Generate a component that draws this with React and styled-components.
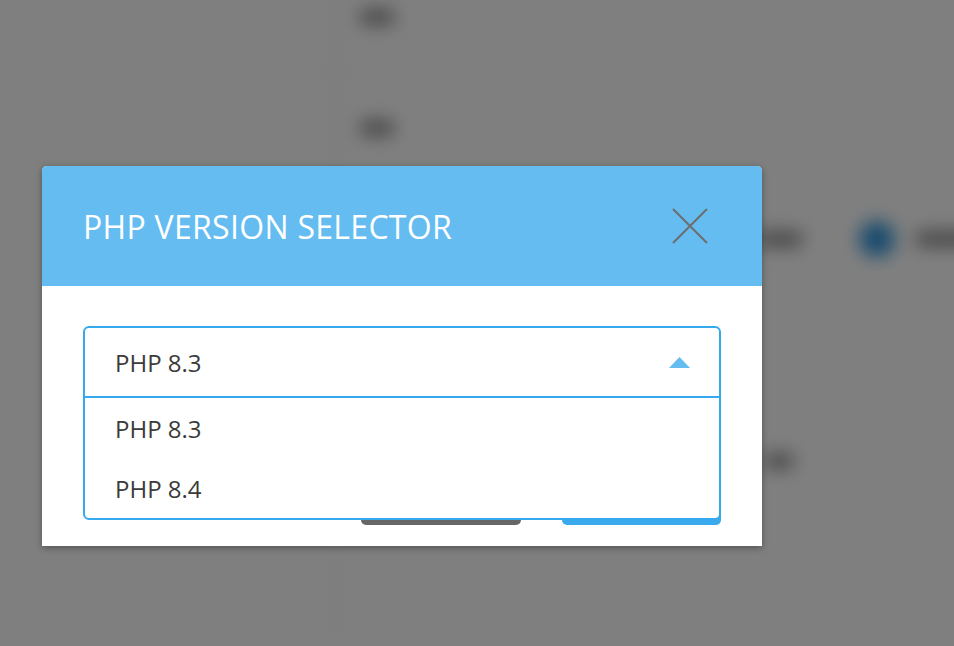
import React, { useState } from "react";
import styled, { createGlobalStyle } from "styled-components";

const GlobalStyle = createGlobalStyle`
  html, body {
    margin: 0;
    padding: 0;
    width: 100%;
    height: 100%;
    overflow: hidden;
    background: #ffffff;
    font-family: "Open Sans", "Liberation Sans", sans-serif;
  }
  * { box-sizing: border-box; }
`;

const Screen = styled.div`
  position: relative;
  width: 954px;
  height: 646px;
  overflow: hidden;
`;

/* page behind the modal, blurred */
const Page = styled.div`
  margin-top: -38px;
  filter: blur(9px);
`;

const Row = styled.div`
  display: grid;
  grid-template-columns: 335px 1fr;
  height: 111px;
  border-bottom: 1px solid #f0f0f0;
`;

const Cell = styled.div`
  display: flex;
  align-items: center;
  gap: 20px;
  padding-left: ${({ pad }) => pad || 0}px;
  border-left: ${({ line }) => (line ? "2px solid #e8e8e8" : "none")};
`;

const Blob = styled.span`
  display: inline-block;
  flex: none;
  width: ${({ w }) => w}px;
  height: 16px;
  margin-right: ${({ mr }) => mr || 0}px;
  border-radius: 8px;
  background: #909090;
`;

const Dot = styled.span`
  display: inline-block;
  flex: none;
  width: 36px;
  height: 36px;
  border-radius: 50%;
  background: #3398dc;
`;

const Overlay = styled.div`
  position: absolute;
  inset: 0;
  background: rgba(0, 0, 0, 0.5);
  padding: 166px 0 0 42px;
`;

const Modal = styled.div`
  width: 720px;
  background: #fff;
  border-radius: 5px 5px 0 0;
  box-shadow: 0 2px 7px rgba(0, 0, 0, 0.35);
`;

const Header = styled.div`
  display: flex;
  align-items: center;
  justify-content: space-between;
  height: 120px;
  padding: 0 54px 0 41px;
  background: #65bcf0;
  border-radius: 5px 5px 0 0;
`;

const Title = styled.h2`
  margin: 0;
  color: #fff;
  font-size: 32px;
  font-weight: 400;
  letter-spacing: 0.3px;
`;

const CloseButton = styled.button`
  display: flex;
  padding: 0;
  border: 0;
  background: none;
  cursor: pointer;
`;

const Body = styled.div`
  padding: 40px 41px 21px;
`;

const SelectWrap = styled.div`
  position: relative;
  height: 72px;
`;

const SelectBox = styled.div`
  position: absolute;
  top: 0;
  left: 0;
  right: 0;
  z-index: 2;
  background: #fff;
  border: 2px solid #36a9ee;
  border-radius: 6px;
`;

const Trigger = styled.div`
  display: flex;
  align-items: center;
  justify-content: space-between;
  height: 68px;
  padding: 0 29px 0 30px;
  color: #3b3b3b;
  font-size: 24px;
`;

const Options = styled.ul`
  list-style: none;
  margin: 0;
  padding: 0;
  border-top: 2px solid #36a9ee;
`;

const Option = styled.li`
  display: flex;
  align-items: center;
  height: 60px;
  padding-left: 30px;
  color: #3b3b3b;
  font-size: 24px;
`;

const Buttons = styled.div`
  display: flex;
  justify-content: flex-end;
  gap: 41px;
  margin-top: 83px;
`;

const Button = styled.button`
  width: ${({ wide }) => wide}px;
  height: 44px;
  border: 0;
  border-radius: 5px;
  color: #fff;
  font-family: inherit;
  font-size: 16px;
  background: ${({ primary }) => (primary ? "#3aa9ee" : "#666666")};
`;

export default function App() {
  const [open] = useState(true);
  const versions = ["PHP 8.3", "PHP 8.4"];

  return (
    <Screen>
      <GlobalStyle />
      <Page>
        <Row>
          <Cell />
          <Cell line pad={22}>
            <Blob w={36} />
          </Cell>
        </Row>
        <Row>
          <Cell />
          <Cell line pad={22}>
            <Blob w={36} />
          </Cell>
        </Row>
        <Row>
          <Cell />
          <Cell line pad={420}>
            <Blob w={46} mr={36} />
            <Dot />
            <Blob w={70} />
          </Cell>
        </Row>
        <Row>
          <Cell />
          <Cell line />
        </Row>
        <Row>
          <Cell />
          <Cell line pad={427}>
            <Blob w={30} />
          </Cell>
        </Row>
        <Row>
          <Cell />
          <Cell line />
        </Row>
      </Page>

      <Overlay>
        <Modal>
          <Header>
            <Title>PHP VERSION SELECTOR</Title>
            <CloseButton aria-label="Close">
              <svg width="36" height="36" viewBox="0 0 36 36">
                <path
                  d="M1 1 L35 35 M35 1 L1 35"
                  stroke="#6e6e6e"
                  strokeWidth="2"
                  fill="none"
                />
              </svg>
            </CloseButton>
          </Header>
          <Body>
            <SelectWrap>
              <SelectBox>
                <Trigger>
                  <span>PHP 8.3</span>
                  <svg width="21" height="11" viewBox="0 0 21 11">
                    <path d="M10.5 0 L21 11 L0 11 Z" fill="#65bcf0" />
                  </svg>
                </Trigger>
                {open && (
                  <Options>
                    {versions.map((v) => (
                      <Option key={v}>{v}</Option>
                    ))}
                  </Options>
                )}
              </SelectBox>
            </SelectWrap>
            <Buttons>
              <Button wide={160}>Cancel</Button>
              <Button wide={159} primary>
                Apply
              </Button>
            </Buttons>
          </Body>
        </Modal>
      </Overlay>
    </Screen>
  );
}
